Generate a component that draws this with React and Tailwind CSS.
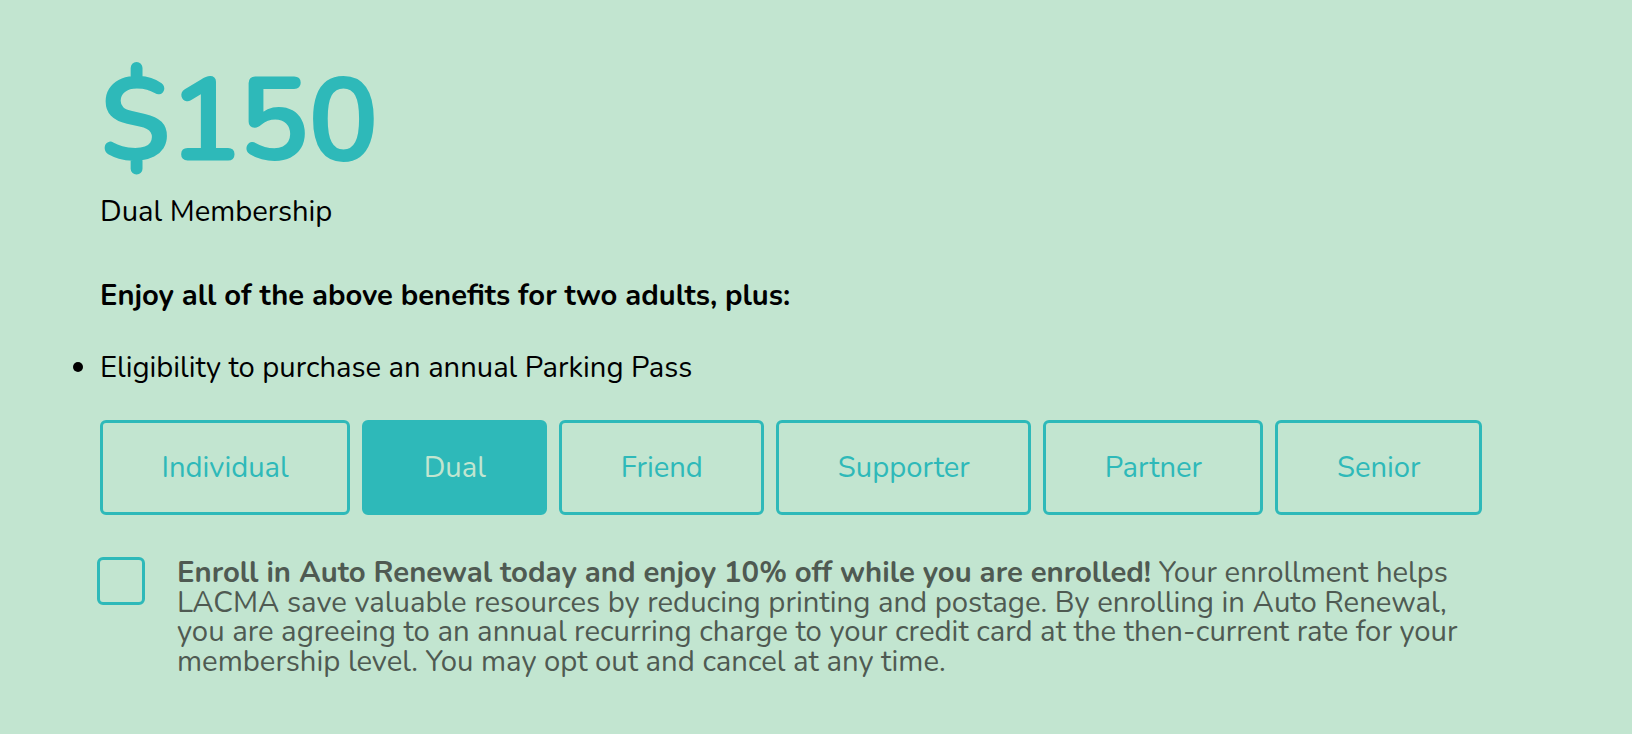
import React, { useState } from 'react';

const levels = ['Individual', 'Dual', 'Friend', 'Supporter', 'Partner', 'Senior'];

const App = () => {
  const [selected, setSelected] = useState('Dual');
  const [autoRenew, setAutoRenew] = useState(false);

  return (
    <div className="min-h-screen w-full bg-[#c2e5d0] font-['Nunito','Open_Sans',sans-serif] text-black">
      <div className="pl-[100px] pt-[63px]">
        <h1 className="text-[118px] font-bold leading-none text-[#2eb9b9] tracking-[-1.5px]">$150</h1>
        <p className="mt-[14px] text-[29.2px] leading-[32px]">Dual Membership</p>

        <p className="mt-[52px] text-[29.2px] leading-[32px] font-bold">Enjoy all of the above benefits for two adults, plus:</p>

        <ul className="mt-[40px] list-disc text-[29.2px] leading-[32px]">
          <li>Eligibility to purchase an annual Parking Pass</li>
        </ul>

        <div className="mt-[37px] flex gap-[12px]">
          {levels.map((level) => (
            <button
              key={level}
              onClick={() => setSelected(level)}
              className={
                level === selected
                  ? 'h-[95px] rounded-[6px] border-[3px] border-[#2eb9b9] bg-[#2eb9b9] px-[58.5px] text-[29.2px] text-[#c2e5d0]'
                  : 'h-[95px] rounded-[6px] border-[3px] border-[#2eb9b9] px-[58.5px] text-[29.2px] text-[#2eb9b9]'
              }
            >
              {level}
            </button>
          ))}
        </div>

        <div className="mt-[42px] flex gap-[32px]">
          <button
            onClick={() => setAutoRenew(!autoRenew)}
            className="-ml-[3px] h-[48px] w-[48px] shrink-0 rounded-[6px] border-[3px] border-[#2eb9b9]"
          >
            {autoRenew && <span className="block h-full w-full bg-[#2eb9b9]" />}
          </button>
          <p className="mt-[1px] text-[29.3px] leading-[29.5px] text-[#4f5a52]">
            <span className="block">
              <strong>Enroll in Auto Renewal today and enjoy 10% off while you are enrolled!</strong> Your enrollment helps
            </span>
            <span className="block">LACMA save valuable resources by reducing printing and postage. By enrolling in Auto Renewal,</span>
            <span className="block">you are agreeing to an annual recurring charge to your credit card at the then-current rate for your</span>
            <span className="block">membership level. You may opt out and cancel at any time.</span>
          </p>
        </div>
      </div>
    </div>
  );
};

export default App;
